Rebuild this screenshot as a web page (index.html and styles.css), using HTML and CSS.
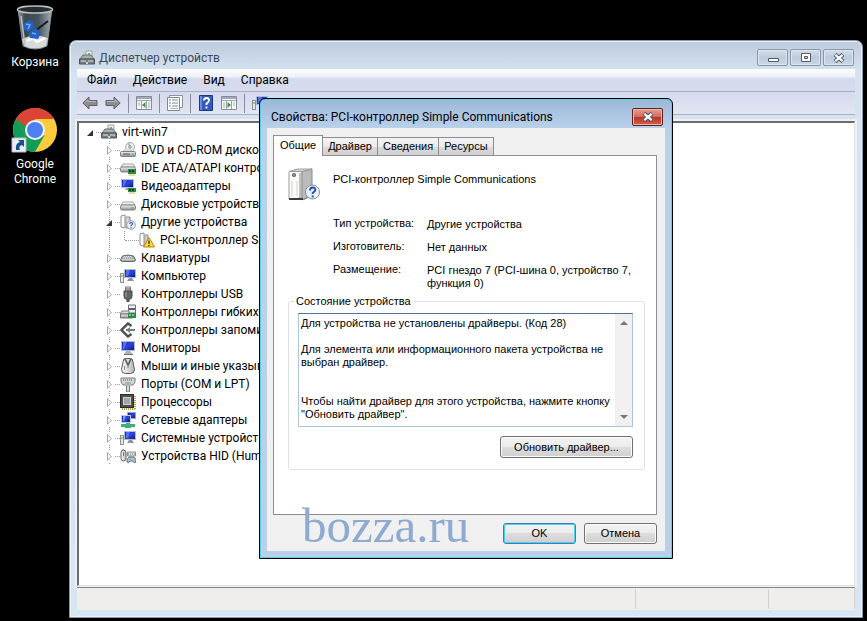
FILE: index.html
```html
<!DOCTYPE html>
<html lang="ru">
<head>
<meta charset="utf-8">
<title>Диспетчер устройств</title>
<link rel="stylesheet" href="styles.css">
</head>
<body>
<svg class="sprite" aria-hidden="true">
  <defs>
    <linearGradient id="metal" x1="0" y1="0" x2="0" y2="1"><stop offset="0" stop-color="#f6f7f7"/><stop offset="1" stop-color="#8b8f92"/></linearGradient>
    <linearGradient id="screen" x1="0" y1="0" x2="1" y2="1"><stop offset="0" stop-color="#0b14a0"/><stop offset=".5" stop-color="#2a48e0"/><stop offset="1" stop-color="#0a1270"/></linearGradient>
    <linearGradient id="tower" x1="0" y1="0" x2="1" y2="0"><stop offset="0" stop-color="#fdfdfd"/><stop offset="1" stop-color="#b4b6b4"/></linearGradient>
    <linearGradient id="bin" x1="0" y1="0" x2="1" y2="0"><stop offset="0" stop-color="#9aa3a8"/><stop offset=".2" stop-color="#3c474e"/><stop offset=".6" stop-color="#45555f"/><stop offset="1" stop-color="#a8b0b4"/></linearGradient>
  </defs>
  <symbol id="i-root" viewBox="0 0 16 16">
    <path d="M7 1h6v7H7z" fill="#e9eee6" stroke="#9aa59a"/><path d="M9 3h2v2H9z" fill="#8aa58c"/>
    <path d="M1 9l3-4h8l3 4z" fill="#a9aeb1" stroke="#6b7073"/><path d="M0.5 9h15v5H.5z" fill="#777d80" stroke="#4d5254"/>
    <path d="M2 11h5M9 11h5" stroke="#dfe3e4"/><path d="M7 12h2v2H7z" fill="#cdd2d4"/>
  </symbol>
  <symbol id="i-dvd" viewBox="0 0 16 16">
    <circle cx="10" cy="5" r="4.500" fill="#eef0ee" stroke="#a5aba8"/><path d="M10 5L7 2a4 4 0 0 1 3-1z" fill="#a9cba0"/><circle cx="10" cy="5" r="1.300" fill="#fff" stroke="#888"/>
    <path d="M2 9l2-2h9l2 2z" fill="#d7dad8"/><rect x=".5" y="9.500" width="15" height="5" rx="1" fill="url(#metal)" stroke="#7c8180"/><path d="M3 12h7" stroke="#555"/><path d="M12 12h2" stroke="#4cb150"/>
  </symbol>
  <symbol id="i-disk" viewBox="0 0 16 16">
    <path d="M1 9l2-3h10l2 3z" fill="#f0f2f1" stroke="#a4a8a6"/><rect x=".5" y="9" width="15" height="5" rx="1.500" fill="url(#metal)" stroke="#7c8180"/><path d="M11 12h3" stroke="#3fae4a"/>
  </symbol>
  <symbol id="i-ide" viewBox="0 0 16 16">
    <path d="M1 7l2-3h10l2 3z" fill="#f0f2f1" stroke="#a4a8a6"/><rect x=".5" y="7" width="15" height="5" rx="1.500" fill="url(#metal)" stroke="#7c8180"/>
    <rect x="8" y="9" width="8" height="5" fill="#2d8c4a"/><path d="M10 10v2M13 10v2" stroke="#173f22" stroke-width="2"/><path d="M9 15h6" stroke="#d5b64a"/>
  </symbol>
  <symbol id="i-video" viewBox="0 0 16 16">
    <rect x="1.500" y="1.500" width="12" height="8" fill="url(#screen)" stroke="#b9bfce"/><path d="M3 2h4l-3 6H3z" fill="#5671f0"/><path d="M6 10h4v2H5z" fill="#9da3a7"/>
    <rect x="8" y="10" width="8" height="4" fill="#2d8c4a"/><path d="M10 11v2M13 11v2" stroke="#173f22" stroke-width="2"/><path d="M9 15h6" stroke="#d5b64a"/>
  </symbol>
  <symbol id="i-unknown" viewBox="0 0 16 16">
    <path d="M1 2l4-1v13l-4-1z" fill="#fff" stroke="#8c9093"/><path d="M6 3h4v11H6z" fill="url(#tower)" stroke="#8c9093"/>
    <circle cx="11" cy="11" r="4.300" fill="#eef4fb" stroke="#8b9db6"/><path d="M9.600 10q0-1.500 1.500-1.500t1.400 1.300q0 .8-1.400 1.600v.5M11 13v1" fill="none" stroke="#2a56b8" stroke-width="1.200"/>
  </symbol>
  <symbol id="i-warn" viewBox="0 0 16 16">
    <path d="M1 2l4-1v13l-4-1z" fill="#fff" stroke="#8c9093"/><path d="M6 3h3v11H6z" fill="url(#tower)" stroke="#8c9093"/>
    <path d="M10 5.500l5.500 9.500h-11z" fill="#ffd83a" stroke="#b78708"/><path d="M10 8.500v3.500M10 13v1.200" stroke="#33280a" stroke-width="1.300"/>
  </symbol>
  <symbol id="i-keyboard" viewBox="0 0 16 16">
    <path d="M.5 10l2-4q5.500-2 11 0l2 4q0 1.500-2 1.500h-11q-2 0-2-1.500z" fill="#a9adac" stroke="#64696a"/><path d="M4 6.500h8M3 8h10M2.500 9.500h11" stroke="#e8eaea" stroke-dasharray="1 1"/>
  </symbol>
  <symbol id="i-computer" viewBox="0 0 16 16">
    <rect x="4.500" y="1.500" width="11" height="8" fill="url(#screen)" stroke="#b5bbca"/><path d="M6 2h4l-2 6H6z" fill="#5671f0"/><path d="M9 10h3l2 3H7z" fill="#8d9396"/><rect x=".5" y="5.500" width="3" height="9" fill="#e8eae8" stroke="#8c9290"/><path d="M1 8h2" stroke="#52a755"/>
  </symbol>
  <symbol id="i-usb" viewBox="0 0 16 16">
    <path d="M5.500 1h5v4h-5z" fill="#dfe2e4" stroke="#777"/><path d="M7 2v2M9 2v2" stroke="#555"/><path d="M4 5h8v5q0 3-3 3.500V16H7v-2.500Q4 13 4 10z" fill="#606669" stroke="#44484a"/><path d="M6 6v5" stroke="#a2a7aa"/>
  </symbol>
  <symbol id="i-floppy" viewBox="0 0 16 16">
    <path d="M8.500 1h7v8h-7z" fill="#eef0f0" stroke="#6d7376"/><path d="M9 5h6" stroke="#59616a" stroke-width="2"/><path d="M0 10l2-3h7v3z" fill="#dadddd" stroke="#7c8180"/><path d="M.5 10h12v4H.5z" fill="url(#metal)" stroke="#70766f"/><path d="M8 9h8v5H8z" fill="#2d8c4a"/><path d="M10 10v2M13 10v2" stroke="#d9ecd8"/>
  </symbol>
  <symbol id="i-storage" viewBox="0 0 16 16">
    <path d="M11.500 4L8 1.500 1.500 8 8 14.500 11.500 12" fill="none" stroke="#4a4e50" stroke-width="2.400"/><path d="M6 8h9" stroke="#777c7f" stroke-width="2"/><path d="M10 5v6l-4-3z" fill="#777c7f"/>
  </symbol>
  <symbol id="i-monitor" viewBox="0 0 16 16">
    <rect x="1.500" y="1.500" width="13" height="9" fill="url(#screen)" stroke="#b5bbca"/><path d="M3 2h4l-3 7H3z" fill="#5671f0"/><path d="M6 11h4l3 3H4z" fill="#aeb3b6"/><path d="M4 14.500h9" stroke="#777"/>
  </symbol>
  <symbol id="i-mouse" viewBox="0 0 16 16">
    <path d="M3.500 2q0-1.500 2-1.500h5q2 0 2 1.500l2 9.500q0 4-4 4h-5q-4 0-4-4z" fill="url(#tower)" stroke="#565b5e"/><path d="M5 1l3 6 3-6" fill="none" stroke="#565b5e" stroke-width="1.600"/><path d="M4.500 8v4M8 7v3" stroke="#888d90"/>
  </symbol>
  <symbol id="i-port" viewBox="0 0 16 16">
    <path d="M1 2h14v4l-2 3H9.500v7h-3V9H3L1 6z" fill="#d5d8d9" stroke="#777c7f"/><path d="M3 4h10" stroke="#555" stroke-dasharray="1 1"/><path d="M5 6h6v4H5z" fill="#aeb3b5"/>
  </symbol>
  <symbol id="i-cpu" viewBox="0 0 16 16">
    <path d="M15 2v13M2 15h13" stroke="#b79a45" stroke-width="2" stroke-dasharray="1 1"/><rect x=".5" y=".5" width="13" height="13" fill="#4d5051" stroke="#292b2c"/><rect x="3.500" y="3.500" width="7" height="7" fill="#a2a5a6" stroke="#d0d2d3"/>
  </symbol>
  <symbol id="i-net" viewBox="0 0 16 16">
    <rect x="7.500" y=".5" width="8" height="6" fill="url(#screen)" stroke="#98a7bb"/><rect x="1.500" y="3.500" width="9" height="7" fill="url(#screen)" stroke="#c3cad5"/><path d="M3 4h3l-2 5H3z" fill="#6f9cf0"/><path d="M6 11h4v1h5v3h-4v1H5v-1H1v-3h5z" fill="#3fae78"/>
  </symbol>
  <symbol id="i-hid" viewBox="0 0 16 16">
    <path d="M3 1v3" stroke="#666"/><rect x="1" y="2" width="5" height="11" rx="2.500" fill="url(#tower)" stroke="#5c6164"/><path d="M3.500 4v4" stroke="#777"/><path d="M7.500 4h8v4h-8z" fill="#dfe1e1" stroke="#8c9193"/><path d="M8 6h7" stroke="#777" stroke-dasharray="1 1"/><path d="M7 14q0-5 3-5h3q3 0 3 5-2 2-3-1h-3q-1 3-3 1z" fill="#a7bfc6" stroke="#60757c"/>
  </symbol>
  <symbol id="i-back" viewBox="0 0 16 14"><path d="M.8 7L7 1v3.500h8v5H7V13z" fill="#8b8d91" stroke="#606166"/><path d="M3 6.500L6 4v1.500h8" fill="none" stroke="#b9bbbf"/></symbol>
  <symbol id="i-panel" viewBox="0 0 16 14"><path d="M.5.500h15v13H.5z" fill="#f5f6f8" stroke="#858b96"/><path d="M1 2h14" stroke="#9ea9bc" stroke-width="2"/><path d="M1 4.500h14M5.500 5v8M10.500 5v8" stroke="#a1a7b1"/><path d="M12 7h2M12 9h2M12 11h2M2 7h2M2 9h2" stroke="#a6acb6"/><path d="M9.500 6v6L6 9z" fill="#3b963f"/></symbol>
  <symbol id="i-props" viewBox="0 0 16 16"><path d="M2.500.500h13v12h-13z" fill="#fff" stroke="#8b919b"/><path d="M.5 2.500h12v13H.5z" fill="#fff" stroke="#7f8792"/><path d="M2 5h2M5 5h6M2 8h2M5 8h6M2 11h2M5 11h6" stroke="#75869c"/><path d="M3 13.500h8" stroke="#b0b7c0"/></symbol>
  <symbol id="i-help" viewBox="0 0 14 16"><path d="M.5.500h13v15H.5z" fill="#3459bd" stroke="#1d3686"/><path d="M1 1h2v14H1z" fill="#6f8bdc"/><path d="M5 5.500Q5 3 7.500 3T10 5.500Q10 7 7.500 8.500V10M7.500 11.500v2" fill="none" stroke="#fff" stroke-width="1.800"/></symbol>
  <symbol id="i-cross" viewBox="0 0 12 10"><path d="M2 1.500l8 7M10 1.500l-8 7" stroke="#4c5360" stroke-width="4.200"/><path d="M2.300 1.800l7.400 6.400M9.700 1.800L2.300 8.200" stroke="#fff" stroke-width="2.200"/></symbol>
</svg>

<main class="desktop">
  <nav class="shortcuts" aria-label="Рабочий стол">
    <a class="shortcut" href="#bin">
      <svg class="pic" viewBox="0 0 48 48">
        <path d="M7 5l5 37q12 6 24 0l5-37z" fill="url(#bin)" stroke="#858e93"/>
        <ellipse cx="24" cy="5.500" rx="17.500" ry="3.500" fill="#262d31" stroke="#b9c0c3" stroke-width="1.500"/>
        <path d="M11 35q12-6 26-1l-2 8q-11 5-22 0z" fill="#d8dbdd"/><path d="M16 37l6-3 4 4 8-4" fill="none" stroke="#fff" stroke-width="2"/>
        <path d="M37 17l-13 10" stroke="#151b20" stroke-width="2"/>
        <path d="M12 20l6-4 5 3-1 6-5 3-5-3zM18 29l7-5 5 5-3 6-8-1z" fill="#2561c4"/><path d="M15 20l4 1-2 4M21 29l4 1" fill="none" stroke="#78a9f1" stroke-width="1.500"/>
        <path d="M10 12l4 29" stroke="#b8c0c4" stroke-width="1.500"/>
      </svg>
      <span>Корзина</span>
    </a>
    <a class="shortcut" href="#chrome">
      <svg class="pic" viewBox="0 0 48 48">
        <circle cx="24" cy="24" r="22" fill="#fdcb3c"/>
        <path d="M24 24L4.950 13A22 22 0 0 1 43.050 13H24z" fill="#db4437"/><path d="M4.950 13A22 22 0 0 0 24 46l9.500-16.500H24L14.500 29.500z" fill="#0f9d58"/>
        <path d="M4.950 13L14.500 29.500 24 24V13z" fill="#db4437"/><path d="M4.950 13L14.500 29.500 20 24z" fill="#0f9d58"/>
        <circle cx="24" cy="24" r="10" fill="#f5f5f5"/><circle cx="24" cy="24" r="8" fill="#4a80f0"/>
        <path d="M1 32h14v14H1z" fill="#e9eef4" stroke="#b4bcc6"/><path d="M5 44q-1-7 4-8l-2-2h6v7l-2-2q-4 1-2 5z" fill="#15508f"/>
      </svg>
      <span>Google Chrome</span>
    </a>
  </nav>

  <section class="manager">
    <header class="manager-title">
      <svg class="icon"><use href="#i-root"/></svg>
      <h1>Диспетчер устройств</h1>
      <div class="win-buttons">
        <button type="button" aria-label="Свернуть"><svg width="12" height="10"><path d="M1.500 5.500h10v3h-10z" fill="#fff" stroke="#555c69"/></svg></button>
        <button type="button" aria-label="Развернуть"><svg width="12" height="10"><path d="M1.500.500h9v8h-9z" fill="#fff" stroke="#555c69"/><path d="M4.500 3.500h3v2h-3z" fill="#c5d2e2" stroke="#555c69"/></svg></button>
        <button type="button" aria-label="Закрыть"><svg width="12" height="10"><use href="#i-cross"/></svg></button>
      </div>
    </header>
    <nav class="menubar">
      <button type="button">Файл</button><button type="button">Действие</button><button type="button">Вид</button><button type="button">Справка</button>
    </nav>
    <div class="toolbar">
      <button type="button" aria-label="Назад"><svg class="icon"><use href="#i-back"/></svg></button>
      <button type="button" aria-label="Вперёд"><svg class="icon flip"><use href="#i-back"/></svg></button>
      <i class="sep"></i>
      <button type="button" aria-label="Дерево консоли"><svg class="icon"><use href="#i-panel"/></svg></button>
      <i class="sep"></i>
      <button type="button" aria-label="Свойства"><svg class="icon"><use href="#i-props"/></svg></button>
      <i class="sep"></i>
      <button type="button" aria-label="Справка"><svg class="icon"><use href="#i-help"/></svg></button>
      <button type="button" aria-label="Область действий"><svg class="icon flip"><use href="#i-panel"/></svg></button>
      <i class="sep"></i>
      <button type="button" aria-label="Обновить конфигурацию"><svg class="icon"><use href="#i-computer"/></svg></button>
    </div>
    <div class="tree-pane">
      <ul class="tree">
        <li><div class="node"><i class="open"></i><svg class="icon"><use href="#i-root"/></svg><span>virt-win7</span></div>
          <ul>
            <li><div class="node"><i class="shut"></i><svg class="icon"><use href="#i-dvd"/></svg><span>DVD и CD-ROM дисководы</span></div></li>
            <li><div class="node"><i class="shut"></i><svg class="icon"><use href="#i-ide"/></svg><span>IDE ATA/ATAPI контроллеры</span></div></li>
            <li><div class="node"><i class="shut"></i><svg class="icon"><use href="#i-video"/></svg><span>Видеоадаптеры</span></div></li>
            <li><div class="node"><i class="shut"></i><svg class="icon"><use href="#i-disk"/></svg><span>Дисковые устройства</span></div></li>
            <li><div class="node"><i class="open"></i><svg class="icon"><use href="#i-unknown"/></svg><span>Другие устройства</span></div>
              <ul>
                <li><div class="node"><i class="leaf"></i><svg class="icon"><use href="#i-warn"/></svg><span>PCI-контроллер Simple</span></div></li>
              </ul>
            </li>
            <li><div class="node"><i class="shut"></i><svg class="icon"><use href="#i-keyboard"/></svg><span>Клавиатуры</span></div></li>
            <li><div class="node"><i class="shut"></i><svg class="icon"><use href="#i-computer"/></svg><span>Компьютер</span></div></li>
            <li><div class="node"><i class="shut"></i><svg class="icon"><use href="#i-usb"/></svg><span>Контроллеры USB</span></div></li>
            <li><div class="node"><i class="shut"></i><svg class="icon"><use href="#i-floppy"/></svg><span>Контроллеры гибких дисков</span></div></li>
            <li><div class="node"><i class="shut"></i><svg class="icon"><use href="#i-storage"/></svg><span>Контроллеры запоминающих устройств</span></div></li>
            <li><div class="node"><i class="shut"></i><svg class="icon"><use href="#i-monitor"/></svg><span>Мониторы</span></div></li>
            <li><div class="node"><i class="shut"></i><svg class="icon"><use href="#i-mouse"/></svg><span>Мыши и иные указывающие устройства</span></div></li>
            <li><div class="node"><i class="shut"></i><svg class="icon"><use href="#i-port"/></svg><span>Порты (COM и LPT)</span></div></li>
            <li><div class="node"><i class="shut"></i><svg class="icon"><use href="#i-cpu"/></svg><span>Процессоры</span></div></li>
            <li><div class="node"><i class="shut"></i><svg class="icon"><use href="#i-net"/></svg><span>Сетевые адаптеры</span></div></li>
            <li><div class="node"><i class="shut"></i><svg class="icon"><use href="#i-computer"/></svg><span>Системные устройства</span></div></li>
            <li><div class="node"><i class="shut"></i><svg class="icon"><use href="#i-hid"/></svg><span>Устройства HID (Human Interface)</span></div></li>
          </ul>
        </li>
      </ul>
    </div>
    <footer class="statusbar"><span></span><span></span><span></span></footer>
  </section>

  <section class="dialog" role="dialog" aria-labelledby="dlg-title">
    <header class="dialog-title">
      <h2 id="dlg-title">Свойства: PCI-контроллер Simple Communications</h2>
      <button class="close" type="button" aria-label="Закрыть"><svg width="12" height="10"><use href="#i-cross"/></svg></button>
    </header>
    <div class="client">
      <div class="tabs" role="tablist">
        <button type="button" role="tab" aria-selected="true" class="tab active">Общие</button>
        <button type="button" role="tab" class="tab">Драйвер</button>
        <button type="button" role="tab" class="tab">Сведения</button>
        <button type="button" role="tab" class="tab">Ресурсы</button>
      </div>
      <div class="panel" role="tabpanel">
        <div class="device">
          <svg class="device-pic" viewBox="0 0 32 36">
            <path d="M1 5l7-3h16v27l-8 4H1z" fill="#7f8381"/><path d="M1 4.500h13v26.500l-13 1z" fill="#fbfbfa" stroke="#9a9d9b"/><path d="M14 4.500L24 2v26l-10 5z" fill="#b9bcba" stroke="#8c8f8d"/><path d="M1 4.500L10 2h14l-10 2.500z" fill="#d7d9d8" stroke="#9a9d9b"/>
            <circle cx="6" cy="8" r="2" fill="#55605a"/><circle cx="6" cy="8" r=".8" fill="#b6e68f"/><path d="M4 14v15M9 14v15" stroke="#cfd1d0"/><path d="M12 6v25" stroke="#858886"/><path d="M1 32h14" stroke="#3c3e3d" stroke-width="2"/>
            <circle cx="24.500" cy="25" r="7" fill="#e9f0f8" stroke="#8190a4"/><path d="M22 23.500q0-3 2.700-3t2.600 2.600q0 1.200-2.600 2.900v1M24.700 28.500v2" fill="none" stroke="#2450a8" stroke-width="2"/>
          </svg>
          <h3>PCI-контроллер Simple Communications</h3>
        </div>
        <dl class="facts">
          <dt>Тип устройства:</dt><dd>Другие устройства</dd>
          <dt>Изготовитель:</dt><dd>Нет данных</dd>
          <dt>Размещение:</dt><dd>PCI гнездо 7 (PCI-шина 0, устройство 7, функция 0)</dd>
        </dl>
        <fieldset class="state">
          <legend><label for="state-text">Состояние устройства</label></legend>
          <div class="memo">
            <textarea id="state-text" readonly>Для устройства не установлены драйверы. (Код 28)

Для элемента или информационного пакета устройства не
выбран драйвер.


Чтобы найти драйвер для этого устройства, нажмите кнопку
"Обновить драйвер".</textarea>
            <div class="scroll"><i class="up"></i><i class="down"></i></div>
          </div>
          <button class="push wide" type="button">Обновить драйвер...</button>
        </fieldset>
      </div>
      <div class="actions">
        <button class="push default" type="button">OK</button>
        <button class="push" type="button">Отмена</button>
      </div>
    </div>
    <p class="watermark">bozza.ru</p>
  </section>
</main>
</body>
</html>
```
FILE: styles.css
```css
* { box-sizing: border-box; }
html, body { height: 100%; }
body { margin: 0; background: #000; font: 12px/18px Roboto, "Noto Sans", sans-serif; color: #000; }
h1, h2, h3, p, ul, dl, dd { margin: 0; padding: 0; font: inherit; }
ul { list-style: none; }
button { font: inherit; color: inherit; padding: 0; border: 0; background: none; }
svg { display: block; flex: none; }
.sprite { position: absolute; width: 0; height: 0; }
.icon { width: 16px; height: 16px; }
.flip { transform: scaleX(-1); }

.desktop { position: relative; min-height: 100%; overflow: hidden; }

.shortcuts { display: flex; flex-direction: column; gap: 36px; width: 70px; padding-top: 4px; }
.shortcut { display: flex; flex-direction: column; align-items: center; gap: 3px; color: #fff; text-align: center; text-decoration: none; line-height: 15px; }
.pic { width: 48px; height: 48px; }

/* Device manager window */
.manager { position: absolute; left: 69px; top: 40px; right: 4px; bottom: 3px; display: flex; flex-direction: column; padding: 0 7px 7px; border: 1px solid #8d99a8; border-radius: 7px 7px 0 0; background: linear-gradient(#bccbdd, #d5e2ef 30px, #d8e5f2); box-shadow: inset 0 0 0 1px #e9f1f9; }
.manager-title { display: flex; align-items: center; gap: 4px; height: 28px; padding: 5px 1px 0 2px; color: #3e4a5c; }
.manager-title h1 { flex: 1; }
.win-buttons { display: flex; gap: 2px; }
.win-buttons button { display: flex; align-items: center; justify-content: center; width: 31px; height: 17px; border: 1px solid #8796ab; border-radius: 2px; background: linear-gradient(#d3deea, #bccbdd 50%, #c9d7e6); box-shadow: inset 0 0 0 1px #dce6f0; }
.menubar { display: flex; gap: 16px; height: 23px; padding: 0 10px; border-bottom: 1px solid #a9aec6; background: linear-gradient(#fff, #eef0f9 35%, #d4d9ec 45%, #d6dbee); line-height: 22px; }
.toolbar { display: flex; align-items: center; gap: 7px; height: 23px; padding: 0 5px; background: linear-gradient(#d5d9ed, #e2e5f2); border-bottom: 1px solid #a9aec6; }
.sep { width: 1px; height: 19px; background: #878b9c; }
.tree-pane { flex: 1; margin-top: 6px; padding: 0 8px; overflow: hidden; border: 1px solid #e3e3e3; border-top: 2px solid #6c6c6c; border-left: 2px solid #6c6c6c; background: #fff; box-shadow: 0 0 0 2px #f0f0f0; }
.tree ul { padding-left: 19px; }
.tree > li > ul { background: linear-gradient(#999 50%, transparent 50%) 22px 0 / 1px 2px repeat-y; }
.node { display: flex; align-items: center; height: 18px; white-space: nowrap; }
.node .icon { margin-right: 5px; }
.node i { position: relative; flex: none; width: 14px; height: 18px; }
.node i::before { content: ""; position: absolute; left: 9px; right: 0; top: 9px; border-top: 1px dotted #999; }
.node i::after { content: ""; position: absolute; }
.node .open::after { left: 0; top: 7px; border: solid transparent; border-width: 0 0 6px 6px; border-bottom-color: #333; }
.node .shut { background: linear-gradient(#fff, #fff) 0 4px / 8px 11px no-repeat; }
.node .shut::after { left: 1px; top: 5px; width: 5px; height: 9px; background: #a6a6a6; clip-path: polygon(0 0, 100% 50%, 0 100%, 0 0, 1px 2px, 1px 7px, 4px 50%, 1px 2px); }
.node .leaf::before { left: 0; }
.node .leaf::after { left: -1px; top: 0; height: 9px; border-left: 1px dotted #999; }
.statusbar { display: grid; grid-template-columns: 1fr 133px 86px; height: 23px; margin-top: 1px; border-top: 1px solid #858585; background: #f0eded; }
.statusbar span { margin: 1px 0; border-right: 1px solid #d3d0d0; }

/* Properties dialog */
.dialog { position: absolute; left: 259px; top: 98px; width: 414px; padding: 0 7px 7px; border: 1px solid #000; border-radius: 6px 6px 0 0; background: linear-gradient(#9cb8d8, #bad1ea 30px, #b9d0e8); box-shadow: inset 0 0 0 1px #59cfee; }
.dialog-title { display: flex; align-items: flex-start; justify-content: space-between; height: 29px; padding: 9px 2px 0 4px; }
.close { display: flex; align-items: center; justify-content: center; width: 31px; height: 18px; border: 1px solid #5a2320; border-radius: 2px; background: linear-gradient(#e3a296, #d3695a 48%, #bc3226 50%, #d3604b); box-shadow: inset 0 0 0 1px #eab5aa; }
.client { padding: 7px 8px 7px 6px; background: #f0f0f0; font: 11px/13px "Liberation Sans", Arial, sans-serif; }
.tabs { display: flex; align-items: flex-end; height: 20px; }
.tab { height: 18px; padding: 0 5px; border: 1px solid #8c8e94; border-left-width: 0; border-bottom: 0; background: linear-gradient(#f3f3f3, #ebebeb 50%, #dcdcdc 50%, #d0d0d0); }
.tab.active { position: relative; height: 21px; margin-bottom: -1px; padding: 0 6px 2px; border-left-width: 1px; background: #fff; }
.panel { padding: 11px 11px 44px 14px; border: 1px solid #8c8e94; background: #fff; }
.device { display: flex; gap: 13px; }
.device-pic { width: 32px; height: 36px; }
.device h3 { padding-top: 6px; }
.facts { display: grid; grid-template-columns: 94px 1fr; row-gap: 9px; padding: 14px 5px 0 45px; }
.facts dd { padding-top: 1px; }
.state { min-width: 0; margin: 5px 0 0; padding: 5px 11px 11px 9px; border: 1px solid #dce0e4; border-radius: 3px; }
.state legend { padding: 0 2px; margin-left: -4px; }
.memo { display: flex; height: 114px; border: 1px solid #a9c6dd; border-top-color: #4b7399; }
.memo textarea { flex: 1; min-width: 0; margin: 0; padding: 3px 2px; border: 0; outline: 0; resize: none; overflow: hidden; white-space: pre; background: #fff; color: #000; font: inherit; }
.scroll { display: flex; flex-direction: column; align-items: center; justify-content: space-between; width: 17px; padding: 7px 0; background: #f0f0f0; }
.up, .down { border: 4px solid transparent; }
.up { border-top: 0; border-bottom-color: #777; }
.down { border-bottom: 0; border-top-color: #777; }
.push { height: 21px; width: 73px; border: 1px solid #707070; border-radius: 3px; background: linear-gradient(#f3f3f3, #ebebeb 50%, #dddddd 50%, #cfcfcf); box-shadow: inset 0 0 0 1px #fbfbfb; }
.push.wide { display: block; width: 133px; height: 22px; margin: 9px 0 0 auto; }
.push.default { border-color: #3c7fb1; box-shadow: inset 0 0 0 1px #48d0f5; }
.actions { display: flex; justify-content: flex-end; gap: 8px; padding-top: 8px; }
.watermark { position: absolute; left: 42px; bottom: 7px; color: #8eaad0; font: 49px/50px "Liberation Serif", "Times New Roman", serif; pointer-events: none; }
```
